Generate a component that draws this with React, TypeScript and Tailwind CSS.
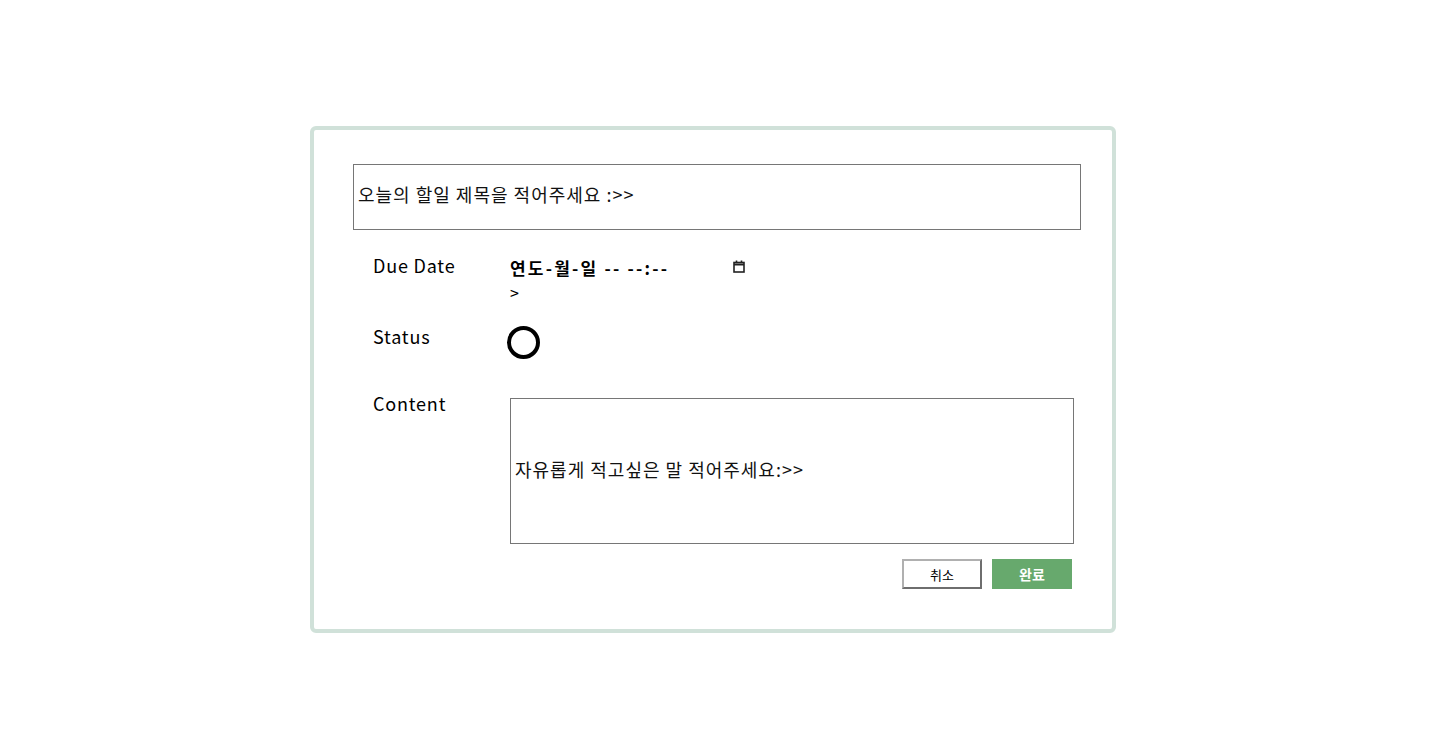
import React from 'react';

const CalendarIcon: React.FC = () => (
  <svg width="12" height="13" viewBox="0 0 12 13" fill="none" stroke="#222" strokeWidth={1.6}>
    <rect x="1" y="2.5" width="10" height="9.5" />
    <path d="M1 4.5h10" strokeWidth={2} />
    <path d="M3.5 0.5v2.5M8.5 0.5v2.5" />
  </svg>
);

export default function App() {
  return (
    <div className="min-h-[741px] w-full bg-white pt-[126px] pl-[310px] font-['Noto_Sans_CJK_KR','Noto_Sans',sans-serif] text-black">
      <div className="w-[806px] h-[507px] border-4 border-[#d0e1d9] rounded-[6px] pt-[34px] pl-[39px] pr-[31px]">
        <div className="h-[66px] w-[728px] border border-[#767676] flex items-center pl-[4px] pb-[6px] text-[18px] tracking-[1px] leading-none text-[#111]">
          오늘의 할일 제목을 적어주세요 :&gt;&gt;
        </div>

        <div className="mt-[23px] flex pl-[20px]">
          <div className="w-[137px] text-[18px] tracking-[0.8px] leading-[24px]">Due Date</div>
          <div className="w-[250px] pt-[3px]">
            <div className="flex items-start h-[24px]">
              <span className="text-[17px] font-bold leading-[24px] tracking-[2.2px] w-[223px]">연도-월-일 -- --:--</span>
              <span className="mt-[4px]">
                <CalendarIcon />
              </span>
            </div>
            <div className="text-[16px] leading-[24px]">&gt;</div>
          </div>
        </div>

        <div className="mt-[20px] flex pl-[20px]">
          <div className="w-[134px] text-[18px] tracking-[0.8px] leading-[24px]">Status</div>
          <div className="mt-[2px] w-[33px] h-[33px] rounded-full border-[4px] border-black" />
        </div>

        <div className="mt-[32px] flex pl-[20px]">
          <div className="w-[137px] text-[18px] tracking-[0.8px] leading-[24px]">Content</div>
          <div className="mt-[7px] w-[564px] h-[146px] border border-[#767676] flex items-center pl-[4px] pb-[4px] text-[18px] tracking-[1px] leading-none text-[#111]">
            자유롭게 적고싶은 말 적어주세요:&gt;&gt;
          </div>
        </div>

        <div className="mt-[15px] flex justify-end gap-[10px] pr-[9px]">
          <button className="w-[80px] h-[30px] border-2 border-t-[#b0b0b0] border-l-[#b0b0b0] border-r-[#6e6e6e] border-b-[#6e6e6e] bg-white text-[13px] leading-none">
            취소
          </button>
          <button className="w-[80px] h-[30px] bg-[#67a96d] text-white text-[14px] font-bold leading-none">
            완료
          </button>
        </div>
      </div>
    </div>
  );
}
